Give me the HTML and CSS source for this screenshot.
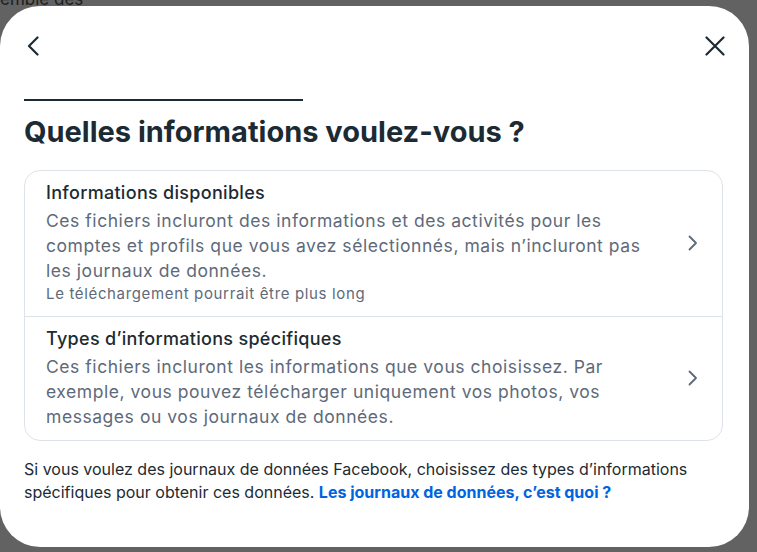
FILE: index.html
```html
<!DOCTYPE html>
<html lang="fr">
<head>
    <meta charset="UTF-8">
    <meta name="viewport" content="width=device-width, initial-scale=1.0">
    <title>Télécharger vos informations</title>
    <link rel="stylesheet" href="styles.css">
</head>
<body>
    <div class="page-behind">
        <p class="behind-text">emble des</p>
    </div>

    <div class="overlay">
        <div class="modal">
            <div class="modal-top">
                <button class="icon-btn" aria-label="Retour">
                    <svg width="20" height="20" viewBox="0 0 20 20"><path d="M13.5 1.5 L5 10 L13.5 18.5" fill="none" stroke="#1c2b33" stroke-width="2.2" stroke-linecap="round" stroke-linejoin="round"/></svg>
                </button>
                <button class="icon-btn" aria-label="Fermer">
                    <svg width="20" height="20" viewBox="0 0 20 20"><path d="M1.5 1.5 L18.5 18.5 M18.5 1.5 L1.5 18.5" fill="none" stroke="#1c2b33" stroke-width="2.2" stroke-linecap="round"/></svg>
                </button>
            </div>

            <div class="progress"></div>

            <h1 class="title">Quelles informations voulez-vous ?</h1>

            <div class="options-card">
                <a class="option" href="#">
                    <div class="option-text">
                        <h2>Informations disponibles</h2>
                        <p>Ces fichiers incluront des informations et des activités pour les comptes et profils que vous avez sélectionnés, mais n’incluront pas les journaux de données.</p>
                        <small>Le téléchargement pourrait être plus long</small>
                    </div>
                    <svg class="chevron" width="12" height="16" viewBox="0 0 12 16"><path d="M2.5 1.5 L9 8 L2.5 14.5" fill="none" stroke="#5e6a7a" stroke-width="1.8" stroke-linecap="round" stroke-linejoin="round"/></svg>
                </a>
                <a class="option" href="#">
                    <div class="option-text">
                        <h2>Types d’informations spécifiques</h2>
                        <p>Ces fichiers incluront les informations que vous choisissez. Par exemple, vous pouvez télécharger uniquement vos photos, vos messages ou vos journaux de données.</p>
                    </div>
                    <svg class="chevron" width="12" height="16" viewBox="0 0 12 16"><path d="M2.5 1.5 L9 8 L2.5 14.5" fill="none" stroke="#5e6a7a" stroke-width="1.8" stroke-linecap="round" stroke-linejoin="round"/></svg>
                </a>
            </div>

            <p class="footnote">Si vous voulez des journaux de données Facebook, choisissez des types d’informations spécifiques pour obtenir ces données. <a href="#">Les journaux de données, c’est quoi ?</a></p>
        </div>
    </div>
</body>
</html>
```

FILE: styles.css
```css
/* page + overlay */
body {
    margin: 0;
    font-family: Inter, "Noto Sans", sans-serif;
    background: #626262;
    height: 552px;
    overflow: hidden;
}

.page-behind {
    height: 100%;
}

.behind-text {
    margin: 0;
    font-size: 17px;
    line-height: 1;
    margin-top: -9px;
    color: #1d1d1d;
}

.overlay {
    position: fixed;
    inset: 0;
}

.modal {
    position: absolute;
    left: 0;
    top: 6px;
    width: 749px;
    height: 541px;
    box-sizing: border-box;
    background: #ffffff;
    border-radius: 40px;
    padding: 20px 26px 0 24px;
}

.modal-top {
    display: flex;
    justify-content: space-between;
    align-items: center;
    height: 40px;
    margin-right: -2px;
}

.icon-btn {
    background: none;
    border: none;
    padding: 0;
    width: 20px;
    height: 20px;
    cursor: pointer;
}

.progress {
    width: 279px;
    height: 2px;
    background: #1c2b33;
    margin-top: 33px;
}

.title {
    margin: 14px 0 0;
    font-size: 29px;
    line-height: 34px;
    font-weight: 700;
    color: #1c2b33;
}

.options-card {
    margin-top: 21px;
    border: 1px solid #dee3e9;
    border-radius: 16px;
}

.option {
    display: flex;
    align-items: center;
    gap: 20px;
    padding: 10px 23px 11px 21px;
    text-decoration: none;
}

.option + .option {
    border-top: 1px solid #dee3e9;
}

.option-text {
    flex: 1;
    max-width: 606px;
}

.option h2 {
    margin: 0 0 3px;
    font-size: 18px;
    line-height: 24px;
    font-weight: 500;
    letter-spacing: 0.3px;
    color: #1c2b33;
}

.option p {
    margin: 0;
    font-size: 17.5px;
    line-height: 25px;
    letter-spacing: 0.55px;
    color: #5e6a7a;
}

.option small {
    display: block;
    font-size: 15px;
    line-height: 22px;
    letter-spacing: 0.65px;
    color: #5e6a7a;
}

.chevron {
    flex-shrink: 0;
    margin-left: auto;
}

.footnote {
    margin: 17px 0 0;
    font-size: 16px;
    line-height: 23px;
    color: #1c2b33;
}

.footnote a {
    color: #0064e0;
    font-weight: 700;
    text-decoration: none;
}
```
